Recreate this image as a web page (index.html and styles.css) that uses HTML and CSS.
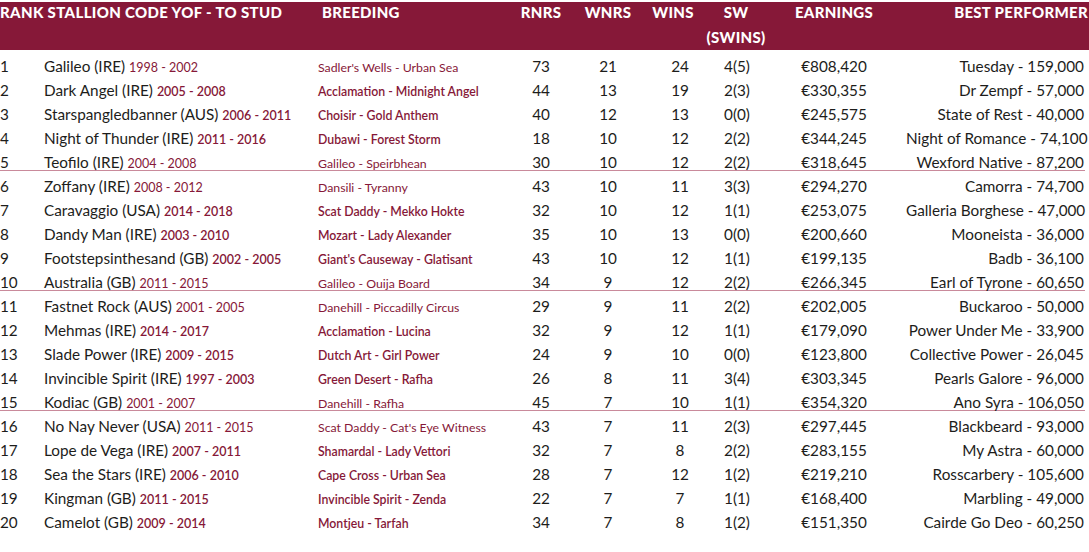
FILE: index.html
```html
<!DOCTYPE html>
<html>
<head>
<meta charset="utf-8">
<link rel="stylesheet" href="styles.css">
</head>
<body>
<div class="sheet">
  <div class="head">
    <div class="h-rank">RANK STALLION CODE YOF - TO STUD</div>
    <div class="h-breed">BREEDING</div>
    <div class="h-num">RNRS</div>
    <div class="h-num">WNRS</div>
    <div class="h-num h-wins">WINS</div>
    <div class="h-num h-sw">SW<br>(SWINS)</div>
    <div class="h-num">EARNINGS</div>
    <div class="h-best">BEST PERFORMER</div>
  </div>
  <div class="rows">
    <div class="row lt"><span class="rk">1</span><span class="st">Galileo (IRE) <em>1998 - 2002</em></span><span class="br">Sadler's Wells - Urban Sea</span><span class="n">73</span><span class="n">21</span><span class="n">24</span><span class="n">4(5)</span><span class="n">€808,420</span><span class="bp">Tuesday - 159,000</span></div>
    <div class="row"><span class="rk">2</span><span class="st">Dark Angel (IRE) <em>2005 - 2008</em></span><span class="br">Acclamation - Midnight Angel</span><span class="n">44</span><span class="n">13</span><span class="n">19</span><span class="n">2(3)</span><span class="n">€330,355</span><span class="bp">Dr Zempf - 57,000</span></div>
    <div class="row"><span class="rk">3</span><span class="st">Starspangledbanner (AUS) <em>2006 - 2011</em></span><span class="br">Choisir - Gold Anthem</span><span class="n">40</span><span class="n">12</span><span class="n">13</span><span class="n">0(0)</span><span class="n">€245,575</span><span class="bp">State of Rest - 40,000</span></div>
    <div class="row"><span class="rk">4</span><span class="st">Night of Thunder (IRE) <em>2011 - 2016</em></span><span class="br">Dubawi - Forest Storm</span><span class="n">18</span><span class="n">10</span><span class="n">12</span><span class="n">2(2)</span><span class="n">€344,245</span><span class="bp">Night of Romance - 74,100</span></div>
    <div class="row lt sep"><span class="rk">5</span><span class="st">Teofilo (IRE) <em>2004 - 2008</em></span><span class="br">Galileo - Speirbhean</span><span class="n">30</span><span class="n">10</span><span class="n">12</span><span class="n">2(2)</span><span class="n">€318,645</span><span class="bp">Wexford Native - 87,200</span></div>
    <div class="row lt"><span class="rk">6</span><span class="st">Zoffany (IRE) <em>2008 - 2012</em></span><span class="br">Dansili - Tyranny</span><span class="n">43</span><span class="n">10</span><span class="n">11</span><span class="n">3(3)</span><span class="n">€294,270</span><span class="bp">Camorra - 74,700</span></div>
    <div class="row"><span class="rk">7</span><span class="st">Caravaggio (USA) <em>2014 - 2018</em></span><span class="br">Scat Daddy - Mekko Hokte</span><span class="n">32</span><span class="n">10</span><span class="n">12</span><span class="n">1(1)</span><span class="n">€253,075</span><span class="bp">Galleria Borghese - 47,000</span></div>
    <div class="row"><span class="rk">8</span><span class="st">Dandy Man (IRE) <em>2003 - 2010</em></span><span class="br">Mozart - Lady Alexander</span><span class="n">35</span><span class="n">10</span><span class="n">13</span><span class="n">0(0)</span><span class="n">€200,660</span><span class="bp">Mooneista - 36,000</span></div>
    <div class="row"><span class="rk">9</span><span class="st">Footstepsinthesand (GB) <em>2002 - 2005</em></span><span class="br">Giant's Causeway - Glatisant</span><span class="n">43</span><span class="n">10</span><span class="n">12</span><span class="n">1(1)</span><span class="n">€199,135</span><span class="bp">Badb - 36,100</span></div>
    <div class="row lt sep"><span class="rk">10</span><span class="st">Australia (GB) <em>2011 - 2015</em></span><span class="br">Galileo - Ouija Board</span><span class="n">34</span><span class="n">9</span><span class="n">12</span><span class="n">2(2)</span><span class="n">€266,345</span><span class="bp">Earl of Tyrone - 60,650</span></div>
    <div class="row lt"><span class="rk">11</span><span class="st">Fastnet Rock (AUS) <em>2001 - 2005</em></span><span class="br">Danehill - Piccadilly Circus</span><span class="n">29</span><span class="n">9</span><span class="n">11</span><span class="n">2(2)</span><span class="n">€202,005</span><span class="bp">Buckaroo - 50,000</span></div>
    <div class="row"><span class="rk">12</span><span class="st">Mehmas (IRE) <em>2014 - 2017</em></span><span class="br">Acclamation - Lucina</span><span class="n">32</span><span class="n">9</span><span class="n">12</span><span class="n">1(1)</span><span class="n">€179,090</span><span class="bp">Power Under Me - 33,900</span></div>
    <div class="row"><span class="rk">13</span><span class="st">Slade Power (IRE) <em>2009 - 2015</em></span><span class="br">Dutch Art - Girl Power</span><span class="n">24</span><span class="n">9</span><span class="n">10</span><span class="n">0(0)</span><span class="n">€123,800</span><span class="bp">Collective Power - 26,045</span></div>
    <div class="row"><span class="rk">14</span><span class="st">Invincible Spirit (IRE) <em>1997 - 2003</em></span><span class="br">Green Desert - Rafha</span><span class="n">26</span><span class="n">8</span><span class="n">11</span><span class="n">3(4)</span><span class="n">€303,345</span><span class="bp">Pearls Galore - 96,000</span></div>
    <div class="row lt sep"><span class="rk">15</span><span class="st">Kodiac (GB) <em>2001 - 2007</em></span><span class="br">Danehill - Rafha</span><span class="n">45</span><span class="n">7</span><span class="n">10</span><span class="n">1(1)</span><span class="n">€354,320</span><span class="bp">Ano Syra - 106,050</span></div>
    <div class="row lt"><span class="rk">16</span><span class="st">No Nay Never (USA) <em>2011 - 2015</em></span><span class="br">Scat Daddy - Cat's Eye Witness</span><span class="n">43</span><span class="n">7</span><span class="n">11</span><span class="n">2(3)</span><span class="n">€297,445</span><span class="bp">Blackbeard - 93,000</span></div>
    <div class="row"><span class="rk">17</span><span class="st">Lope de Vega (IRE) <em>2007 - 2011</em></span><span class="br">Shamardal - Lady Vettori</span><span class="n">32</span><span class="n">7</span><span class="n">8</span><span class="n">2(2)</span><span class="n">€283,155</span><span class="bp">My Astra - 60,000</span></div>
    <div class="row"><span class="rk">18</span><span class="st">Sea the Stars (IRE) <em>2006 - 2010</em></span><span class="br">Cape Cross - Urban Sea</span><span class="n">28</span><span class="n">7</span><span class="n">12</span><span class="n">1(2)</span><span class="n">€219,210</span><span class="bp">Rosscarbery - 105,600</span></div>
    <div class="row"><span class="rk">19</span><span class="st">Kingman (GB) <em>2011 - 2015</em></span><span class="br">Invincible Spirit - Zenda</span><span class="n">22</span><span class="n">7</span><span class="n">7</span><span class="n">1(1)</span><span class="n">€168,400</span><span class="bp">Marbling - 49,000</span></div>
    <div class="row"><span class="rk">20</span><span class="st">Camelot (GB) <em>2009 - 2014</em></span><span class="br">Montjeu - Tarfah</span><span class="n">34</span><span class="n">7</span><span class="n">8</span><span class="n">1(2)</span><span class="n">€151,350</span><span class="bp">Cairde Go Deo - 60,250</span></div>
  </div>
</div>
</body>
</html>
```
FILE: styles.css
```css
html, body {
  margin: 0;
  padding: 0;
  background: #ffffff;
}
.sheet {
  padding-top: 2px;
  font-family: "Lato", "Liberation Sans", sans-serif;
  color: #1d1d1b;
}
.head {
  display: grid;
  grid-template-columns: 322px 192px 54px 80px 64px 50px 144px 1fr;
  align-items: start;
  background: #861838;
  color: #ffffff;
  font-weight: 900;
  font-size: 15px;
  letter-spacing: 0.3px;
  line-height: 25px;
  height: 48px;
  padding-right: 1px;
}
.head > div { margin-top: -2px; }
.h-rank { white-space: nowrap; letter-spacing: 0.35px; }
.h-num { text-align: center; white-space: nowrap; }
.h-wins { padding-right: 14px; }
.h-sw { margin-left: -10px; margin-right: -8px; }
.h-best { text-align: right; white-space: nowrap; }
.rows {
  padding-top: 1px;
}
.row {
  display: grid;
  grid-template-columns: 44px 274px 196px 54px 80px 64px 50px 144px 1fr;
  align-items: baseline;
  height: 24px;
  padding-top: 6px;
  box-sizing: border-box;
  line-height: 18px;
  font-size: 15.3px;
  padding-right: 5px;
  white-space: nowrap;
}
.row.sep {
  box-shadow: inset 0 -1px 0 #c98a9b;
  margin-right: 4px;
  padding-right: 1px;
}
.st em {
  font-style: normal;
  font-size: 12.5px;
  color: #861838;
  font-weight: 600;
}
.br {
  font-size: 12.3px;
  color: #861838;
  font-weight: 600;
}
.row.lt .br, .row.lt .st em {
  font-weight: 400;
}
.n { text-align: center; }
.bp { text-align: right; }
```
